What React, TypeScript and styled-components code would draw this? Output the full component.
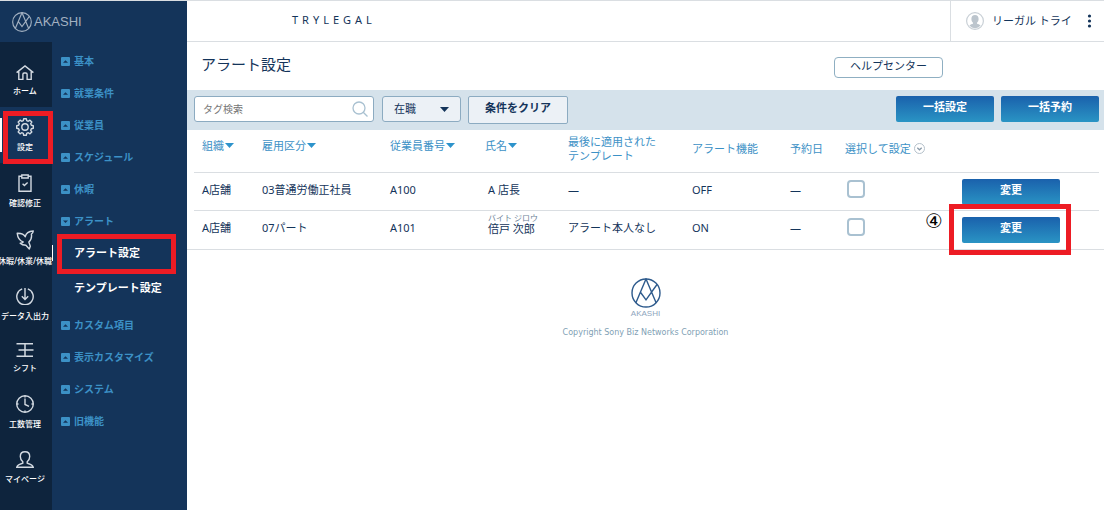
import React from "react";
import styled, { createGlobalStyle, css } from "styled-components";

const navy = "#14345a";
const link = "#3c91c6";
const line = "#dadee2";

const GlobalStyle = createGlobalStyle`
  *, *::before, *::after { box-sizing: border-box; }
  body {
    margin: 0;
    background: #fff;
    color: ${navy};
    font-family: "Noto Sans", "Noto Sans CJK JP", sans-serif;
    font-size: 11px;
    line-height: 14px;
  }
  button, input, select { font: inherit; color: inherit; margin: 0; }
  a { color: inherit; text-decoration: none; }
  ul { list-style: none; margin: 0; padding: 0; }
  svg { display: block; flex: none; }
`;

const Page = styled.div`
  display: flex;
  min-height: 100vh;
  border-top: 1px solid ${line};
`;

const Sidebar = styled.aside`
  display: flex;
  flex-direction: column;
  flex: none;
  width: 187px;
  background: ${navy};
`;

const Brand = styled.a`
  display: flex;
  align-items: center;
  gap: 2px;
  height: 41px;
  padding-left: 12px;
  color: #a3b1c1;
  font: 13px/14px "Liberation Sans", sans-serif;
`;

const SideBody = styled.div`
  display: flex;
  flex: 1;
`;

const Rail = styled.ul`
  width: 52px;
  padding-top: 12px;
  background: #0e243d;
`;

const RailItem = styled.li<{ $active?: boolean }>`
  position: relative;
  ${(p) =>
    p.$active &&
    css`
      background: ${navy};
      &::before {
        content: "";
        position: absolute;
        left: 0;
        top: 11px;
        width: 2px;
        height: 34px;
        background: #fff;
      }
    `}
`;

const RailLink = styled.a`
  display: flex;
  flex-direction: column;
  align-items: center;
  gap: 5px;
  padding: 11px 2px 10px 0;
  color: #fff;
  font-size: 8px;
  font-weight: 500;
  line-height: 12px;
  white-space: nowrap;
  svg { color: #d3dae2; }
`;

const Menu = styled.ul`
  flex: 1;
  padding-top: 3px;
`;

const MenuButton = styled.button`
  display: flex;
  align-items: center;
  gap: 4px;
  width: 100%;
  height: 32px;
  padding: 0 0 0 9px;
  border: 0;
  background: none;
  color: ${link};
  font-size: 10px;
  font-weight: 700;
  text-align: left;
`;

const SubMenu = styled.ul`
  display: flex;
  flex-direction: column;
  gap: 4px;
  padding-bottom: 6px;
`;

const SubItem = styled.li<{ $active?: boolean }>`
  position: relative;
  color: #fff;
  font-weight: 700;
  a { display: block; padding-left: 22px; line-height: 31px; }
  ${(p) =>
    p.$active &&
    css`
      &::before {
        content: "";
        position: absolute;
        left: 0;
        top: 8px;
        width: 1px;
        height: 16px;
        background: #fff;
      }
    `}
`;

const Marker = styled.span<{ $x: number; $y: number; $w: number; $h: number }>`
  position: absolute;
  z-index: 1;
  left: ${(p) => p.$x}px;
  top: ${(p) => p.$y}px;
  width: ${(p) => p.$w}px;
  height: ${(p) => p.$h}px;
  border: 5px solid #ed1c24;
  pointer-events: none;
`;

const StepNumber = styled.span`
  position: absolute;
  left: -37px;
  top: -7px;
  color: #000;
  font: 20px/22px "DejaVu Sans", sans-serif;
`;

const Main = styled.main`
  flex: 1;
  min-width: 0;
`;

const TopBar = styled.header`
  display: flex;
  align-items: stretch;
  justify-content: space-between;
  height: 41px;
  border-bottom: 1px solid ${line};
`;

const Company = styled.div`
  padding-left: 105px;
  line-height: 38px;
  letter-spacing: 4px;
`;

const Account = styled.div`
  display: flex;
  align-items: center;
  width: 154px;
  padding: 0 10px 0 15px;
  border-left: 1px solid ${line};
`;

const UserName = styled.span`
  flex: 1;
  padding-left: 8px;
  white-space: nowrap;
`;

const PlainButton = styled.button`
  display: inline-flex;
  align-items: center;
  gap: 1px;
  padding: 0;
  border: 0;
  background: none;
`;

const TitleRow = styled.div`
  display: flex;
  align-items: center;
  justify-content: space-between;
  height: 48px;
  padding: 0 161px 0 14px;
`;

const Title = styled.h1`
  margin: 0;
  padding-bottom: 4px;
  font-size: 15px;
  font-weight: 400;
  line-height: 20px;
`;

const HelpLink = styled.a`
  width: 109px;
  margin-top: 2px;
  padding-bottom: 3px;
  border: 1px solid #8fafc2;
  border-radius: 4px;
  line-height: 16px;
  text-align: center;
`;

const FilterBar = styled.form`
  display: flex;
  align-items: flex-start;
  height: 40px;
  padding: 6px 5px 0 7px;
  gap: 7px;
  background: #d5e2eb;
`;

const SearchField = styled.label`
  display: flex;
  align-items: center;
  width: 180px;
  height: 26px;
  padding: 0 5px 0 8px;
  border: 1px solid #8cabc1;
  border-radius: 3px;
  background: #fff;
  input {
    flex: 1;
    min-width: 0;
    padding: 0;
    border: 0;
    outline: 0;
    font-size: 10px;
    background: none;
  }
  input::placeholder { color: #757575; }
`;

const SelectField = styled.label`
  display: grid;
  align-items: center;
  width: 79px;
  height: 26px;
  margin-left: 1px;
  border: 1px solid #8cabc1;
  border-radius: 3px;
  background: #ecf1f6;
  select, svg { grid-area: 1 / 1; }
  select {
    width: 100%;
    height: 24px;
    padding: 0 0 0 11px;
    border: 0;
    background: none;
    appearance: none;
  }
  svg { justify-self: end; margin-right: 11px; pointer-events: none; }
`;

const ClearButton = styled.button`
  width: 100px;
  height: 28px;
  padding: 0 0 4px;
  border: 1px solid #8cabc1;
  border-radius: 2px;
  background: #ecf1f6;
  font-weight: 700;
`;

const Spacer = styled.span`
  flex: 1;
`;

const PrimaryButton = styled.button`
  display: block;
  width: 98px;
  height: 26px;
  padding: 0 0 4px;
  border: 0;
  border-radius: 2px;
  background: linear-gradient(#1a61ac, #2a94c4);
  color: #fff;
  font-weight: 700;
`;

const TableArea = styled.section`
  padding: 0 5px 1px 7px;
`;

const Table = styled.table`
  width: 100%;
  table-layout: fixed;
  border-collapse: collapse;
  th, td { padding: 0 0 0 8px; text-align: left; white-space: nowrap; }
  th { height: 42px; color: ${link}; font-weight: 400; }
  td { height: 38px; padding-bottom: 2px; }
  tbody tr { border-top: 1px solid ${line}; }
`;

const Col = styled.col<{ $w?: number }>`
  width: ${(p) => (p.$w ? `${p.$w}px` : "auto")};
`;

const SortButton = styled(PlainButton)`
  padding-bottom: 10px;
  color: ${link};
  svg { color: #2d93cb; }
`;

const HeadText = styled.span`
  display: flex;
  align-items: center;
  gap: 3px;
  padding-bottom: 4px;
`;

const PersonName = styled.div`
  padding-left: 3px;
`;

const Reading = styled.div`
  margin-top: -6px;
  color: #6c7f96;
  font-size: 8px;
  line-height: 8px;
`;

const CheckBox = styled.input`
  display: block;
  width: 18px;
  height: 18px;
  margin: 0 0 2px 2px;
  appearance: none;
  border: 2px solid #a9c1d1;
  border-radius: 4px;
  background: #fff;
`;

const ActionCell = styled.div`
  position: relative;
  width: 97px;
  margin-top: 4px;
`;

const Footer = styled.footer`
  display: flex;
  flex-direction: column;
  align-items: center;
  padding-top: 28px;
  border-top: 1px solid ${line};
`;

const FooterBrand = styled.span`
  color: #8ea5bd;
  font: 8px/12px "Liberation Sans", sans-serif;
`;

const Copyright = styled.small`
  margin-top: 6px;
  color: #7f9fb5;
  font: 8px/14px "DejaVu Sans", sans-serif;
`;

const Mark = ({ size, color }: { size: number; color: string }) => (
  <svg width={size} height={size} viewBox="0 0 30 30" fill="none" stroke={color} strokeWidth={size > 25 ? 1.4 : 1.7} aria-hidden="true">
    <circle cx="15" cy="15" r="14" />
    <path d="M4.8 25 15 1 25.2 25M9.3 14 15 21.8 26 6.5" />
  </svg>
);

const RailIcon = ({ h, children }: { h: number; children: React.ReactNode }) => (
  <svg width="18" height={h} viewBox={`0 0 18 ${h}`} fill="none" stroke="currentColor" strokeWidth="1.4" aria-hidden="true">
    {children}
  </svg>
);

const gearPath = (() => {
  const points: string[] = [];
  for (let i = 0; i < 8; i++) {
    [[-15, 6.6], [-9, 8.4], [9, 8.4], [15, 6.6]].forEach(([offset, radius]) => {
      const a = ((i * 45 + offset) * Math.PI) / 180;
      points.push(`${(9 + radius * Math.sin(a)).toFixed(2)} ${(9 - radius * Math.cos(a)).toFixed(2)}`);
    });
  }
  return `M${points.join("L")}Z`;
})();

const railItems = [
  { label: "ホーム", h: 15, icon: <path d="M.6 7.6 9 .9l8.4 6.7M2.8 6.3v8.1h4.1V9.2c0-.8.5-1.2 1.2-1.2h1.8c.7 0 1.2.4 1.2 1.2v5.2h4.1V6.3" /> },
  { label: "設定", h: 18, active: true, icon: <><path d={gearPath} strokeLinejoin="round" /><circle cx="9" cy="9" r="3.2" /></> },
  { label: "確認修正", h: 18, icon: <><path d="M5.5 2.2H3v15.1h12V2.2h-2.5M5.8 1h6.4v3H5.8z" /><path d="m6.6 9.8 1.8 1.8 3.2-3.2" /></> },
  { label: "休暇/休業/休職", h: 20, icon: <path d="M1.200 3.200c3 0 6.300-.2 8 3.600C10 3 13 1.300 17.300 1c-.2 1.600-1 2.600-1.900 3.200.6 3.600-.4 6-2.600 7.800l1.500 4.200-1 2.800-3.400-3.700c-2.400 0-4.300-.6-5.700-2 1.300-.1 2.300-.5 3-1.300C3.700 10.700 1.600 7.500 1.200 3.200Z" strokeLinejoin="round" /> },
  { label: "データ入出力", h: 17, icon: <><path d="M6.200.9a8.200 8.200 0 1 0 5.600 0" /><path d="M9 0v11.200M5.800 8.200 9 11.400l3.200-3.200" /></> },
  { label: "シフト", h: 14, icon: <path d="M.5.800h16.500M2.500 7h15M.5 13.200h16.500M9 1v12" strokeWidth="1.500" /> },
  { label: "工数管理", h: 18, icon: <><circle cx="9" cy="9" r="8.300" /><path d="M9 3.500V9.500l4 1.800M9 1v1.500M9 15.500V17M1 9h1.500M15.500 9H17" /></> },
  { label: "マイページ", h: 17, icon: <path d="M9 .7c3 0 4.700 1.800 4.700 4.700 0 2.400-1.200 4.200-2.500 5.300v1.500c2.800.8 5.500 1.500 6.100 4.100H.7c.6-2.600 3.300-3.300 6.100-4.100v-1.500C5.500 9.600 4.300 7.800 4.300 5.400 4.300 2.500 6 .7 9 .7Z" /> },
];

const menuItems = [
  { label: "基本" },
  { label: "就業条件" },
  { label: "従業員" },
  { label: "スケジュール" },
  { label: "休暇" },
  { label: "アラート", children: ["アラート設定", "テンプレート設定"] },
  { label: "カスタム項目" },
  { label: "表示カスタマイズ" },
  { label: "システム" },
  { label: "旧機能" },
];

const rows = [
  { org: "A店舗", type: "03普通労働正社員", id: "A100", name: "A 店長", template: "―", alert: "OFF", date: "―" },
  { org: "A店舗", type: "07パート", id: "A101", name: "倍戸 次郎", reading: "バイト ジロウ", template: "アラート本人なし", alert: "ON", date: "―", marked: true },
];

const ToggleIcon = ({ open }: { open: boolean }) => (
  <svg width="9" height="9" viewBox="0 0 9 9" aria-hidden="true">
    <rect width="9" height="9" rx="1" fill="#3c91c6" />
    <path d={open ? "M2 3.500h5L4.500 6Z" : "M2 5.800h5L4.500 3.200Z"} fill={navy} />
  </svg>
);

const Caret = () => (
  <svg width="9" height="5" viewBox="0 0 9 5" aria-hidden="true">
    <path d="M0 0h9L4.500 5Z" fill="currentColor" />
  </svg>
);

const SortHead = ({ label }: { label: string }) => (
  <th scope="col">
    <SortButton type="button">
      {label}
      <Caret />
    </SortButton>
  </th>
);

export default function App() {
  return (
    <>
      <GlobalStyle />
      <Page>
        <Sidebar>
          <Brand href="#">
            <Mark size={20} color="#a3b1c1" />
            AKASHI
          </Brand>
          <SideBody>
            <Rail>
              {railItems.map((item) => (
                <RailItem key={item.label} $active={item.active}>
                  <RailLink href="#">
                    <RailIcon h={item.h}>{item.icon}</RailIcon>
                    {item.label}
                  </RailLink>
                  {item.active && <Marker $x={3} $y={4} $w={50} $h={53} />}
                </RailItem>
              ))}
            </Rail>
            <Menu>
              {menuItems.map((item) => (
                <li key={item.label}>
                  <MenuButton type="button" aria-expanded={!!item.children}>
                    <ToggleIcon open={!!item.children} />
                    {item.label}
                  </MenuButton>
                  {item.children && (
                    <SubMenu>
                      {item.children.map((child, i) => (
                        <SubItem key={child} $active={i === 0}>
                          <a href="#">{child}</a>
                          {i === 0 && <Marker $x={5} $y={-3} $w={119} $h={40} />}
                        </SubItem>
                      ))}
                    </SubMenu>
                  )}
                </li>
              ))}
            </Menu>
          </SideBody>
        </Sidebar>
        <Main>
          <TopBar>
            <Company>TRYLEGAL</Company>
            <Account>
              <svg width="18" height="18" viewBox="0 0 18 18" aria-hidden="true">
                <circle cx="9" cy="9" r="8.400" fill="#fff" stroke="#c9d0d6" strokeWidth="1.200" />
                <path d="M9 3c2.300 0 3.600 1.600 3.600 3.900 0 1.700-.7 3-1.600 3.800v1c1.600.5 2.900.9 3.600 1.900A7.200 7.200 0 0 1 9 16.200a7.200 7.200 0 0 1-5.600-2.600c.7-1 2-1.400 3.600-1.900v-1c-.9-.8-1.600-2.100-1.600-3.800C5.400 4.600 6.700 3 9 3Z" fill="#bcc5cd" />
              </svg>
              <UserName>リーガル トライ</UserName>
              <PlainButton type="button" aria-label="メニュー">
                <svg width="9" height="14" viewBox="0 0 9 14" fill={navy} aria-hidden="true">
                  <circle cx="4.500" cy="2" r="1.600" />
                  <circle cx="4.500" cy="7" r="1.600" />
                  <circle cx="4.500" cy="12" r="1.600" />
                </svg>
              </PlainButton>
            </Account>
          </TopBar>
          <TitleRow>
            <Title>アラート設定</Title>
            <HelpLink href="#">ヘルプセンター</HelpLink>
          </TitleRow>
          <FilterBar>
            <SearchField>
              <input type="text" placeholder="タグ検索" aria-label="タグ検索" />
              <svg width="16" height="16" viewBox="0 0 16 16" fill="none" stroke="#a9c1d1" strokeWidth="1.300" aria-hidden="true">
                <circle cx="7" cy="7" r="6" />
                <path d="m11.200 11.200 4.300 4.300" />
              </svg>
            </SearchField>
            <SelectField>
              <select aria-label="在職状況" defaultValue="在職">
                <option>在職</option>
              </select>
              <Caret />
            </SelectField>
            <ClearButton type="button">条件をクリア</ClearButton>
            <Spacer />
            <PrimaryButton type="button">一括設定</PrimaryButton>
            <PrimaryButton type="button">一括予約</PrimaryButton>
          </FilterBar>
          <TableArea>
            <Table>
              <colgroup>
                {[60, 128, 95, 83, 124, 98, 55, 117, undefined].map((w, i) => (
                  <Col key={i} $w={w} />
                ))}
              </colgroup>
              <thead>
                <tr>
                  <SortHead label="組織" />
                  <SortHead label="雇用区分" />
                  <SortHead label="従業員番号" />
                  <SortHead label="氏名" />
                  <th scope="col"><HeadText>最後に適用された<br />テンプレート</HeadText></th>
                  <th scope="col"><HeadText>アラート機能</HeadText></th>
                  <th scope="col"><HeadText>予約日</HeadText></th>
                  <th scope="col">
                    <HeadText>
                      選択して設定
                      <PlainButton type="button" aria-label="選択メニュー">
                        <svg width="11" height="11" viewBox="0 0 11 11" fill="none" stroke="#b4c0ca" aria-hidden="true">
                          <circle cx="5.500" cy="5.500" r="5" />
                          <path d="M3.300 4.700 5.500 6.800l2.200-2.100" stroke="#8899a8" strokeWidth="1.200" />
                        </svg>
                      </PlainButton>
                    </HeadText>
                  </th>
                  <td />
                </tr>
              </thead>
              <tbody>
                {rows.map((row) => (
                  <tr key={row.id}>
                    <td>{row.org}</td>
                    <td>{row.type}</td>
                    <td>{row.id}</td>
                    <td>
                      <PersonName>
                        {row.reading && <Reading>{row.reading}</Reading>}
                        {row.name}
                      </PersonName>
                    </td>
                    <td>{row.template}</td>
                    <td>{row.alert}</td>
                    <td>{row.date}</td>
                    <td><CheckBox type="checkbox" aria-label={`${row.name}を選択`} /></td>
                    <td>
                      <ActionCell>
                        <PrimaryButton type="button">変更</PrimaryButton>
                        {row.marked && (
                          <>
                            <StepNumber>④</StepNumber>
                            <Marker $x={-13} $y={-13} $w={122} $h={51} />
                          </>
                        )}
                      </ActionCell>
                    </td>
                  </tr>
                ))}
              </tbody>
            </Table>
          </TableArea>
          <Footer>
            <Mark size={30} color="#2d5a8c" />
            <FooterBrand>AKASHI</FooterBrand>
            <Copyright>Copyright Sony Biz Networks Corporation</Copyright>
          </Footer>
        </Main>
      </Page>
    </>
  );
}
